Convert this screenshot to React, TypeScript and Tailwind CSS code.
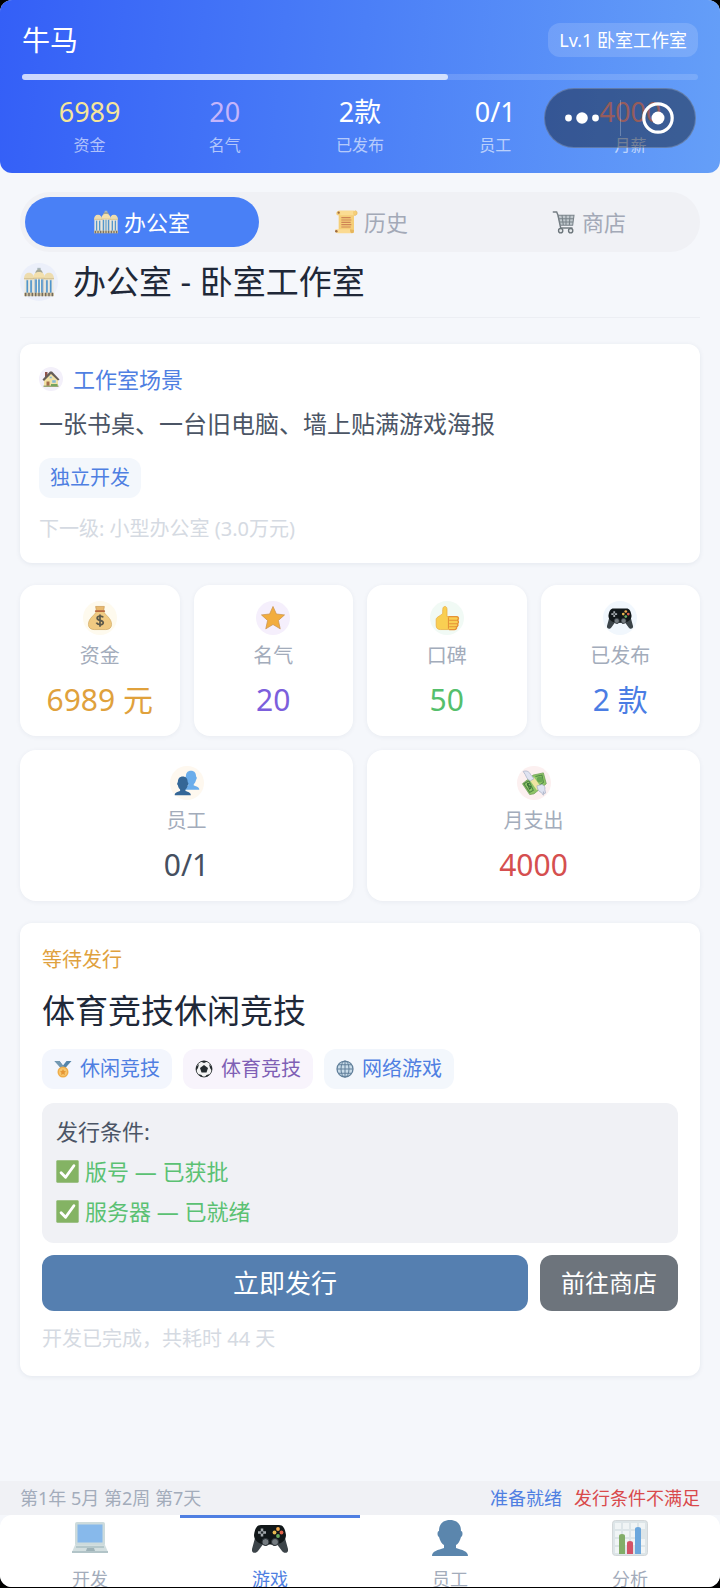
import clsx from "clsx";
import type { ReactNode } from "react";

type IconProps = { className?: string };

function Svg({ className, children }: { className?: string; children: ReactNode }) {
  return (
    <svg className={clsx("block shrink-0", className)} viewBox="0 0 36 36" fill="none" aria-hidden="true">
      {children}
    </svg>
  );
}

function OfficeIcon({ className }: IconProps) {
  return (
    <Svg className={className}>
      <path d="M16 1h4v4h-4z" fill="#a9b6bb" />
      <path d="M13.500 8c0-3 1.500-5 4.500-5s4.500 2 4.500 5z" fill="#a5a795" />
      <path d="M1 12h11v22H1zM24 12h11v22H24z" fill="#d5d8d6" />
      <path d="M11.500 12h13v22h-13z" fill="#c3ccd1" />
      <path d="M0 15c0-5 2-8 6-8s6 3 6 8zM36 15c0-5-2-8-6-8s-6 3-6 8z" fill="#eddcae" />
      <path d="M11 14c0-5 2-8 7-8s7 3 7 8z" fill="#f3e0ae" />
      <path d="M0 14h12M24 14h12" stroke="#cdbb8c" />
      <path d="M11 13.500h14" stroke="#cdbb8c" />
      <path d="M4 16v15M8.500 16v15M14.500 15v16M18 15v16M21.500 15v16M27.500 16v15M32 16v15" stroke="#4f95cc" strokeWidth="1.900" />
      <path d="M1.500 15v17M6.200 15v17M11 15v17M16.200 14v18M19.800 14v18M25 15v17M29.800 15v17M34.500 15v17" stroke="#f3f0e2" strokeWidth="1.300" />
      <path d="M0 31h36v4H0z" fill="#cfc3a2" />
      <path d="M2 31v4M6 31v4M10 31v4M14 31v4M18 31v4M22 31v4M26 31v4M30 31v4M34 31v4" stroke="#70695f" strokeWidth="1.700" />
    </Svg>
  );
}

function ScrollIcon({ className }: IconProps) {
  return (
    <Svg className={className}>
      <path d="M7 1h25c3 0 4 6 0 7h-2v26H7V8H5C2 6 4 1 7 1z" fill="#f5ce78" />
      <path d="M7 1h23c-2 1-2 5 0 7H9c1-3 0-6-2-7z" fill="#fbdc92" />
      <path d="M30 8h2c4-1 3-7 0-7" stroke="#e6b65e" />
      <path d="M2 29h22c1 0 0 5 3 6H6c-3 0-5-3-4-6z" fill="#fbda91" />
      <path d="M24 29c0 4 1 6 3 6s3-2 3-5" fill="#e6b65e" />
      <path d="M11 11.500h14M11 15h15M11 18.500h14M11 22h15M11 25.500h14" stroke="#cf8556" strokeWidth="1.800" />
      <circle cx="7" cy="4" r="1.700" fill="#9e6b40" />
      <circle cx="3.500" cy="32" r="1.900" fill="#9e6b40" />
    </Svg>
  );
}

function CartIcon({ className }: IconProps) {
  return (
    <Svg className={className}>
      <path d="M8 8h25l-2 15H12z" fill="#c1c8cd" />
      <path d="M2 3h5l2 5 4 19h17" stroke="#747d83" strokeWidth="2.200" strokeLinecap="round" />
      <path d="M9 8h24l-2 15H12M10 13h22M11 18h21M15 8l2 15M21 8v15M27 8l-1 15" stroke="#79838a" strokeWidth="1.600" />
      <circle cx="13" cy="31" r="3.200" fill="#e6e9eb" stroke="#6c757b" strokeWidth="2" />
      <circle cx="28" cy="31" r="3.200" fill="#e6e9eb" stroke="#6c757b" strokeWidth="2" />
    </Svg>
  );
}

function HouseIcon({ className }: IconProps) {
  return (
    <Svg className={className}>
      <path d="M6 4h5v12H6z" fill="#8d5148" />
      <path d="M4 18L17 5h4l11 13v15H4z" fill="#f2e1a4" />
      <path d="M1 19L16 3h4l15 16-3 2L18 8 4 22z" fill="#655d59" />
      <path d="M9 23h6v10H9z" fill="#a46d4c" />
      <path d="M20 20h8v6h-8zM15 13h5v4h-5z" fill="#87b9d1" stroke="#e9e2c0" />
      <path d="M3 31h30v3H3z" fill="#9aa778" />
      <path d="M18 28h13v4H18z" fill="#76a45d" />
    </Svg>
  );
}

function MoneyBagIcon({ className }: IconProps) {
  return (
    <Svg className={className}>
      <path d="M12 2h12l-1 6H13z" fill="#e9b96e" stroke="#c99b55" />
      <path d="M13 9h10c2 5 11 9 11 18 0 5-4 7-8 7H10c-4 0-8-2-8-7 0-9 9-13 11-18z" fill="#f0ca82" stroke="#d1aa64" />
      <path d="M12 8.500h12" stroke="#b9683f" strokeWidth="2.200" strokeLinecap="round" />
      <path d="M22.500 17c-1-2-8-3-8.500 1-.300 4 8.500 2.500 8.500 6.500 0 4-8 3.500-9.500 0M18 13v17" stroke="#5c594a" strokeWidth="2.400" />
    </Svg>
  );
}

function StarIcon({ className }: IconProps) {
  return (
    <Svg className={className}>
      <path d="M18 2l4.700 10.500L34 13.700l-8.500 7.700L28 33l-10-6-10 6 2.500-11.600L2 13.700l11.300-1.200z" fill="#f2ad3e" stroke="#c9924c" strokeLinejoin="round" />
    </Svg>
  );
}

function ThumbIcon({ className }: IconProps) {
  return (
    <Svg className={className}>
      <path d="M13 3c2-2 5-1 5 3v10h13c4 0 4 5 1 5 3 1 2 5 0 5 2 1 1 4-1 4 1 2 0 4-3 4H9c-4 0-6-2-6-6v-8c0-4 9-6 9-9 0-3 0-7 1-8z" fill="#f9cf52" stroke="#e7aa3c" />
      <path d="M20 16h11c4 0 3 5 1 5 3 1 2 5 0 5 2 1 1 4-1 4 1 2 0 4-3 4h-7" stroke="#e59237" strokeWidth="1.800" />
      <path d="M20 17v16M21 21h11M21 26h11M21 30h10" stroke="#e59237" strokeWidth="1.500" />
    </Svg>
  );
}

function GamepadIcon({ className }: IconProps) {
  return (
    <Svg className={className}>
      <path d="M3 18L0 29c-1 4 4 5 6 2l6-8h12l6 8c2 3 7 2 6-2l-3-11z" fill="#3c4449" />
      <path d="M9 5h18c4 0 6 3 7 10 0 5-4 8-8 9l-4 2c-2-2-6-2-8 0l-4-2c-4-1-8-4-8-9C3 8 5 5 9 5z" fill="#111719" />
      <path d="M10 8.500v8M6 12.500h8" stroke="#a3a9ad" strokeWidth="2.500" />
      <circle cx="10" cy="12.500" r="1.200" fill="#22292d" />
      <circle cx="26" cy="9" r="1.900" fill="#f1a94e" />
      <circle cx="22.500" cy="12.500" r="1.900" fill="#e9b94f" />
      <circle cx="29.500" cy="12.500" r="1.900" fill="#df6149" />
      <circle cx="26" cy="16" r="1.900" fill="#6dac60" />
      <circle cx="13.500" cy="22" r="3.500" fill="#747b80" stroke="#2d3439" />
      <circle cx="23" cy="22" r="3.500" fill="#747b80" stroke="#2d3439" />
    </Svg>
  );
}

const bustPath = "M18 0c7 0 11 4 11 11 2 0 2 5 0 6-1 4-3 7-5 8v3c6 2 12 3 12 8H0c0-5 6-6 12-8v-3c-2-1-4-4-5-8-2-1-2-6 0-6C7 4 11 0 18 0z";

function PersonIcon({ className }: IconProps) {
  return (
    <Svg className={className}>
      <path d={bustPath} fill="#5b86ad" />
    </Svg>
  );
}

function PeopleIcon({ className }: IconProps) {
  return (
    <Svg className={className}>
      <path d={bustPath} transform="translate(12 1) scale(.640 .730)" fill="#6badeb" />
      <path d={bustPath} transform="translate(1 9) scale(.620 .720)" fill="#356797" />
    </Svg>
  );
}

function FlyingMoneyIcon({ className }: IconProps) {
  return (
    <Svg className={className}>
      <path d="M17 7L31 4l4 15-17 14-6 1L2 19z" fill="#8fc667" stroke="#6a9a4f" />
      <path d="M20 9l9-2 2 10-5 4M4 19l8 12 5-3-6-13z" stroke="#4d8544" strokeWidth="1.400" />
      <circle cx="26" cy="13" r="4" fill="#68a752" />
      <path d="M12 19c-4-1-4 3-1 3s4 4 0 4M9 18l3 9" stroke="#386f38" strokeWidth="1.500" />
      <path d="M12 14l6-4 10 14-6 4z" fill="#eee4a2" />
      <path d="M3 2c5-2 9 1 10 4l5 6-5 3C7 13 8 8 3 2zM22 22l7-2c3 1 5 4 4 7l1 5-2 1-1-3v5l-3-4c-4-1-5-5-6-9z" fill="#dfe3f1" stroke="#a7afc5" />
    </Svg>
  );
}

function MedalIcon({ className }: IconProps) {
  return (
    <Svg className={className}>
      <path d="M1 2h10l7 9 7-9h10l-8 9-5 6h-8l-4-5z" fill="#5585aa" />
      <path d="M1 2h10l11 15h-7z" fill="#7399b2" />
      <circle cx="18" cy="24" r="11" fill="#efad49" />
      <circle cx="18" cy="24" r="8" fill="#f7c66d" />
      <path d="M18 18l2 4 4 .500-3 3 1 4.500-4-2-4 2 1-4.500-3-3 4-.500z" fill="#e59635" />
    </Svg>
  );
}

function BallIcon({ className }: IconProps) {
  return (
    <Svg className={className}>
      <circle cx="18" cy="18" r="16" fill="#f3f3f3" stroke="#4d5254" strokeWidth="2" />
      <path d="M18 10l8 6-3 9H13l-3-9zM11 3l7 3 7-3c-4-2-10-2-14 0zM2 14l6-6-2 8-4 6zM34 14l-6-6 2 8 4 6zM6 28l7 2 3 4c-4 0-7-2-10-6zM30 28l-7 2-3 4c4 0 7-2 10-6z" fill="#252b2e" />
    </Svg>
  );
}

function GlobeIcon({ className }: IconProps) {
  return (
    <Svg className={className}>
      <circle cx="18" cy="18" r="16" fill="#c9dce9" />
      <circle cx="18" cy="18" r="16" stroke="#607f9a" strokeWidth="2.500" />
      <ellipse cx="18" cy="18" rx="8" ry="16" stroke="#607f9a" strokeWidth="2" />
      <path d="M18 2v32M2 18h32M5 9.500h26M5 26.500h26" stroke="#607f9a" strokeWidth="2" />
    </Svg>
  );
}

function CheckIcon({ className }: IconProps) {
  return (
    <Svg className={className}>
      <rect x=".500" y=".500" width="35" height="35" rx="2" fill="#84b364" />
      <path d="M8 20l7 7L28 9" stroke="#fff" strokeWidth="4.500" strokeLinecap="round" strokeLinejoin="round" />
    </Svg>
  );
}

function LaptopIcon({ className }: IconProps) {
  return (
    <Svg className={className}>
      <rect x="3" y="2" width="30" height="24" rx="2" fill="#cddbdc" />
      <rect x="5.500" y="4.500" width="25" height="18" fill="#87b9eb" />
      <path d="M3 25h30l3 7H0z" fill="#d3dfe0" />
      <path d="M4 27h28" stroke="#abc0c4" strokeWidth="1.500" />
      <path d="M0 31h36v2H0z" fill="#b2c4c8" />
      <path d="M15 28h7l1 3h-9z" fill="#9fb3b8" />
    </Svg>
  );
}

function ChartIcon({ className }: IconProps) {
  return (
    <Svg className={className}>
      <rect x=".500" y=".500" width="35" height="35" rx="3" fill="#dde5e8" stroke="#d3d7d9" />
      <path d="M3 3h6v6H3zM11 3h6v6h-6zM19 3h6v6h-6zM27 3h6v6h-6zM3 11h6v6H3zM11 11h6v6h-6zM19 11h6v6h-6zM3 19h6v6H3zM11 19h6v6h-6zM19 19h6v6h-6zM27 19h6v6h-6zM3 27h6v6H3zM27 27h6v6h-6z" fill="#f0f4f5" />
      <path d="M7 16q0-2 3-2t3 2v18H7z" fill="#82ad68" />
      <path d="M15 23q0-2 3-2t3 2v11h-6z" fill="#d35368" />
      <path d="M23 9q0-2 3-2t3 2v25h-6z" fill="#6ba7dd" />
    </Svg>
  );
}

const summary = [
  { value: "6989", label: "资金", color: "text-[#f5e59a]" },
  { value: "20", label: "名气", color: "text-[#c5b5fb]" },
  { value: "2款", label: "已发布", color: "text-white" },
  { value: "0/1", label: "员工", color: "text-white" },
  { value: "4000", label: "月薪", color: "text-[#fb9a9a]" },
];

const stats = [
  { Icon: MoneyBagIcon, label: "资金", value: "6989 元", color: "text-[#e0a13c]", tint: "bg-[#fefaee]" },
  { Icon: StarIcon, label: "名气", value: "20", color: "text-[#7c5fdc]", tint: "bg-[#f5effc]" },
  { Icon: ThumbIcon, label: "口碑", value: "50", color: "text-[#55bf6c]", tint: "bg-[#f1faf5]" },
  { Icon: GamepadIcon, label: "已发布", value: "2 款", color: "text-[#4b7de4]", tint: "bg-[#f1f7fd]" },
];

const monthly = [
  { Icon: PeopleIcon, label: "员工", value: "0/1", color: "text-[#454f60]", tint: "bg-[#fef8ef]" },
  { Icon: FlyingMoneyIcon, label: "月支出", value: "4000", color: "text-[#d54f4f]", tint: "bg-[#fcf0f0]" },
];

const tags = [
  { Icon: MedalIcon, label: "休闲竞技", style: "bg-[#f3f6fd] text-[#4f7fe2]" },
  { Icon: BallIcon, label: "体育竞技", style: "bg-[#f8f4fc] text-[#7f5fb5]" },
  { Icon: GlobeIcon, label: "网络游戏", style: "bg-[#f3f7fc] text-[#4f7fe2]" },
];

const nav = [
  { Icon: LaptopIcon, label: "开发" },
  { Icon: GamepadIcon, label: "游戏", active: true },
  { Icon: PersonIcon, label: "员工" },
  { Icon: ChartIcon, label: "分析" },
];

function StatCard({ Icon, label, value, color, tint }: (typeof stats)[number]) {
  return (
    <div className="flex flex-col items-center rounded-2xl bg-white py-4 shadow-[0_1px_5px_rgba(30,50,90,0.06)]">
      <span className={clsx("flex size-[34px] items-center justify-center rounded-full", tint)}>
        <Icon className="size-[26px]" />
      </span>
      <span className="mt-[9px] text-[20px] leading-6 text-[#a3acbb]">{label}</span>
      <span className={clsx("mt-3 text-[30px] leading-10 whitespace-nowrap", color)}>{value}</span>
    </div>
  );
}

export default function App() {
  return (
    <div className="min-h-screen bg-black pb-px font-['Noto_Sans','Noto_Sans_CJK_SC',sans-serif]">
      <div className="flex min-h-[calc(100vh-1px)] flex-col overflow-hidden rounded-xl bg-[#f5f7fb]">
        <header className="relative rounded-b-xl bg-[linear-gradient(95deg,#345ff7_0%,#4b7ff7_50%,#659ff8_100%)] px-[22px] pt-[23px] pb-4">
          <div className="flex h-[34px] items-center justify-between">
            <h1 className="text-[28px] leading-[34px] text-white">牛马</h1>
            <span className="rounded-xl bg-white/15 px-[11px] text-[18px] leading-[34px] text-white">Lv.1 卧室工作室</span>
          </div>
          <div className="mt-[17px] h-1.5 rounded-full bg-white/15">
            <div className="h-full w-[63%] rounded-full bg-white/70" />
          </div>
          <dl className="mt-4 grid grid-cols-5 text-center">
            {summary.map(({ value, label, color }) => (
              <div key={label} className="flex flex-col-reverse gap-[5px]">
                <dt className="text-[16px] leading-6 text-white/60">{label}</dt>
                <dd className={clsx("text-[27px] leading-8", color)}>{value}</dd>
              </div>
            ))}
          </dl>
          <div className="absolute top-[88px] right-6 flex h-[60px] w-[152px] items-center rounded-full border border-white/20 bg-black/40">
            <button type="button" aria-label="更多" className="flex flex-1 items-center justify-center">
              <svg className="h-3 w-[34px]" viewBox="0 0 34 12" fill="#fff">
                <circle cx="3.500" cy="6" r="3.400" />
                <circle cx="17" cy="6" r="5.800" />
                <circle cx="30.500" cy="6" r="3.400" />
              </svg>
            </button>
            <span className="h-9 w-px bg-white/25" />
            <button type="button" aria-label="关闭" className="flex flex-1 items-center justify-center">
              <svg className="size-8" viewBox="0 0 32 32" fill="none">
                <circle cx="16" cy="16" r="14.200" stroke="#fff" strokeWidth="3.200" />
                <circle cx="16" cy="16" r="6.500" fill="#fff" />
              </svg>
            </button>
          </div>
        </header>

        <main className="flex-1 px-5">
          <div className="mt-[19px] flex h-[60px] gap-1.5 rounded-full bg-[#f0f1f5] p-[5px] text-[22px] leading-7 text-[#a3a9b7]">
            <button type="button" className="flex flex-auto items-center justify-center gap-1.5 rounded-full bg-[#4980f6] text-white">
              <OfficeIcon className="size-6" />
              办公室
            </button>
            <button type="button" className="flex flex-auto items-center justify-center gap-1.5 rounded-full">
              <ScrollIcon className="size-6" />
              历史
            </button>
            <button type="button" className="flex flex-auto items-center justify-center gap-1.5 rounded-full">
              <CartIcon className="size-6" />
              商店
            </button>
          </div>

          <div className="mt-2 flex items-center gap-[15px] border-b border-[#eceef3] pb-[13px]">
            <span className="flex size-[38px] items-center justify-center rounded-full bg-[#ebeffa]">
              <OfficeIcon className="size-[30px]" />
            </span>
            <h2 className="text-[33px] leading-[44px] text-[#202838]">办公室 - 卧室工作室</h2>
          </div>

          <section className="mt-[26px] rounded-xl bg-white px-[19px] pt-5 pb-[19px] shadow-[0_1px_5px_rgba(30,50,90,0.08)]">
            <div className="flex items-center gap-2.5">
              <span className="flex size-6 items-center justify-center rounded-full bg-[#f3f0fa]">
                <HouseIcon className="size-[18px]" />
              </span>
              <h3 className="text-[22px] leading-[30px] text-[#4f7fe2]">工作室场景</h3>
            </div>
            <p className="mt-3 text-[24px] leading-9 text-[#4b5565]">一张书桌、一台旧电脑、墙上贴满游戏海报</p>
            <span className="mt-4 flex h-10 w-fit items-center rounded-xl bg-[#f3f7fc] px-[11px] text-[20px] text-[#4f7fe2]">独立开发</span>
            <p className="mt-4 text-[20px] leading-[30px] text-[#d5dae2]">下一级: 小型办公室 (3.0万元)</p>
          </section>

          <div className="mt-[22px] grid grid-cols-4 gap-3.5">
            {stats.map((item) => (
              <StatCard key={item.label} {...item} />
            ))}
          </div>
          <div className="mt-3.5 grid grid-cols-2 gap-3.5">
            {monthly.map((item) => (
              <StatCard key={item.label} {...item} />
            ))}
          </div>

          <section className="mt-[22px] mb-6 rounded-xl bg-white px-[22px] py-[23px] shadow-[0_1px_5px_rgba(30,50,90,0.08)]">
            <p className="text-[20px] leading-7 text-[#dfa13e]">等待发行</p>
            <h3 className="mt-[15px] text-[33px] leading-[44px] text-[#202838]">体育竞技休闲竞技</h3>
            <div className="mt-4 flex flex-wrap gap-[11px]">
              {tags.map(({ Icon, label, style }) => (
                <span key={label} className={clsx("flex h-10 items-center gap-2 rounded-xl px-3 text-[20px]", style)}>
                  <Icon className="size-[18px]" />
                  {label}
                </span>
              ))}
            </div>
            <div className="mt-3.5 rounded-xl bg-[#f0f1f5] px-3.5 pt-2 pb-3 text-[22px] leading-10">
              <p className="text-[#4b5565]">发行条件:</p>
              <ul className="text-[#5bc173]">
                <li className="flex items-center gap-1.5">
                  <CheckIcon className="size-[23px]" />
                  版号 — 已获批
                </li>
                <li className="flex items-center gap-1.5">
                  <CheckIcon className="size-[23px]" />
                  服务器 — 已就绪
                </li>
              </ul>
            </div>
            <div className="mt-3 flex gap-3 text-white">
              <button type="button" className="h-14 flex-1 rounded-xl bg-[#557fb0] text-[26px]">立即发行</button>
              <button type="button" className="h-14 rounded-xl bg-[#6d747c] px-[21px] text-[24px]">前往商店</button>
            </div>
            <p className="mt-3.5 text-[20px] leading-7 text-[#d5dae2]">开发已完成，共耗时 44 天</p>
          </section>
        </main>

        <div className="flex items-center justify-between bg-[#f0f1f5] px-5 text-[18px] leading-[34px]">
          <span className="text-[#a3acbb]">第1年 5月 第2周 第7天</span>
          <span className="flex gap-3">
            <span className="text-[#4f7fe2]">准备就绪</span>
            <span className="text-[#d9494b]">发行条件不满足</span>
          </span>
        </div>

        <nav className="grid h-[72px] grid-cols-4 overflow-hidden rounded-t-xl bg-white">
          {nav.map(({ Icon, label, active }) => (
            <a
              key={label}
              href="#"
              className={clsx(
                "flex flex-col items-center border-t-[3px] text-[18px] leading-6",
                active ? "border-[#4f7fe2] text-[#4f7fe2]" : "border-transparent text-[#a3acbb]",
              )}
            >
              <Icon className="mt-0.5 size-9" />
              <span className="mt-[11px]">{label}</span>
            </a>
          ))}
        </nav>
      </div>
    </div>
  );
}
